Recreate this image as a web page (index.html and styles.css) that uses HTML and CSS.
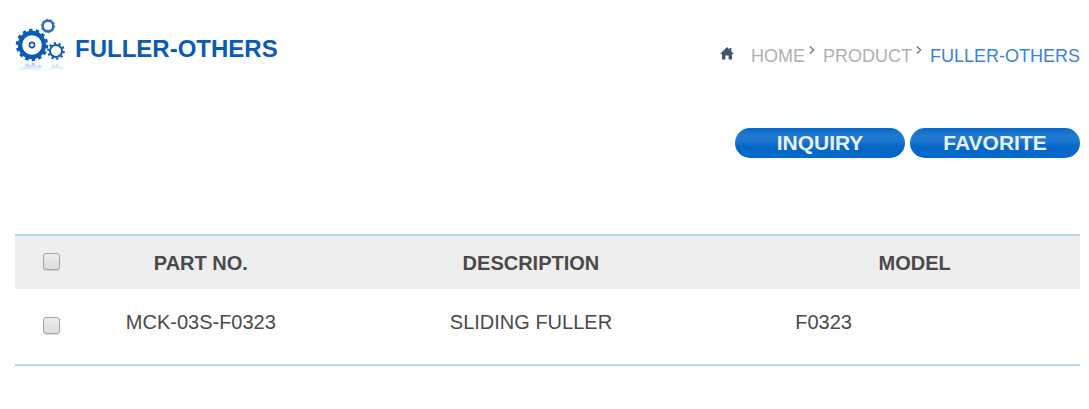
FILE: index.html
```
<!DOCTYPE html>
<html lang="en">
<head>
    <meta charset="UTF-8">
    <meta name="viewport" content="width=device-width, initial-scale=1.0">
    <title>FULLER-OTHERS</title>
    <link rel="stylesheet" href="styles.css">
</head>
<body>
    <header class="page-header">
        <div class="title">
            <svg class="gears" width="54" height="54" viewBox="0 0 54 54" aria-hidden="true">
                <defs>
                    <linearGradient id="fade" gradientUnits="userSpaceOnUse" x1="0" y1="43" x2="0" y2="53">
                        <stop offset="0" stop-color="#fff" stop-opacity="0.4"/>
                        <stop offset="1" stop-color="#fff" stop-opacity="0"/>
                    </linearGradient>
                    <mask id="fadeMask" maskUnits="userSpaceOnUse" x="0" y="43" width="54" height="11">
                        <rect x="0" y="43" width="54" height="11" fill="url(#fade)"/>
                    </mask>
                </defs>
                <g id="lowGears" fill="none" stroke="#0b5cb5">
                    <!-- big gear -->
                    <circle cx="17" cy="27" r="12" stroke-width="4.4"/>
                    <circle cx="17" cy="27" r="14.8" stroke-width="2.8" stroke-dasharray="3.4 3.242"/>
                    <circle cx="17" cy="27" r="2.6" stroke-width="1.6"/>
                    <!-- right gear -->
                    <circle cx="41" cy="33" r="6" stroke-width="2"/>
                    <circle cx="41" cy="33" r="7.8" stroke-width="2" stroke-dasharray="2.2 2.701"/>
                </g>
                <!-- top gear -->
                <circle cx="33" cy="8" r="5.4" fill="none" stroke="#2a6fc0" stroke-width="2.6"/>
                <circle cx="33" cy="8" r="6.8" fill="none" stroke="#2a6fc0" stroke-width="0.8" stroke-dasharray="2 2.272"/>
                <!-- reflection -->
                <g mask="url(#fadeMask)">
                    <use href="#lowGears" transform="translate(0 88) scale(1 -1)"/>
                </g>
            </svg>
            <h1>FULLER-OTHERS</h1>
        </div>

        <nav class="breadcrumb">
            <svg class="home" width="14" height="13" viewBox="0 0 14 13" aria-hidden="true">
                <path fill="#44546a" d="M7 0 L9.4 2.4 V1 H11.4 V4.4 L14 7 H12 V12 Q12 12.5 11.5 12.5 H8.6 V8.5 H5.4 V12.5 H2.5 Q2 12.5 2 12 V7 H0 Z"/>
            </svg>
            <a href="#">HOME</a>
            <svg class="arrow" width="6" height="8" viewBox="0 0 6 8" aria-hidden="true">
                <path fill="none" stroke="#777" stroke-width="1.4" d="M1 0.5 L4.6 4 L1 7.5"/>
            </svg>
            <a href="#">PRODUCT</a>
            <svg class="arrow" width="6" height="8" viewBox="0 0 6 8" aria-hidden="true">
                <path fill="none" stroke="#777" stroke-width="1.4" d="M1 0.5 L4.6 4 L1 7.5"/>
            </svg>
            <a href="#" class="current">FULLER-OTHERS</a>
        </nav>
    </header>

    <div class="buttons">
        <button type="button">INQUIRY</button>
        <button type="button">FAVORITE</button>
    </div>

    <table>
        <colgroup>
            <col class="col-check">
            <col class="col-part">
            <col class="col-desc">
            <col class="col-model">
        </colgroup>
        <thead>
            <tr>
                <th><input type="checkbox" id="checkAll" aria-label="Select all"></th>
                <th>PART NO.</th>
                <th>DESCRIPTION</th>
                <th>MODEL</th>
            </tr>
        </thead>
        <tbody>
            <tr>
                <td><input type="checkbox" aria-label="Select MCK-03S-F0323"></td>
                <td>MCK-03S-F0323</td>
                <td>SLIDING FULLER</td>
                <td class="model">F0323</td>
            </tr>
        </tbody>
    </table>

    <script>
        // header checkbox ticks every row
        document.getElementById('checkAll').onchange = function () {
            document.querySelectorAll('tbody input').forEach(box => {
                box.checked = this.checked;
            });
        };
    </script>
</body>
</html>
```
FILE: styles.css
```
* {
    box-sizing: border-box;
}

body {
    font-family: "Liberation Sans", Arial, sans-serif;
    margin: 0;
    padding: 18px 9px 40px 15px;
    background-color: #fff;
    color: #4a4a4a;
}

/* Title and breadcrumb */
.page-header {
    display: flex;
    justify-content: space-between;
    align-items: flex-start;
}

.title {
    display: flex;
    align-items: flex-start;
    gap: 6px;
}

h1 {
    margin: 16px 0 0;
    font-size: 24px;
    line-height: 30px;
    color: #0b5cb0;
}

.breadcrumb {
    display: flex;
    align-items: flex-start;
    margin-top: 27px;
    font-size: 18px;
    line-height: 22px;
}

.breadcrumb a {
    color: #b0b0b0;
    text-decoration: none;
}

.breadcrumb a.current {
    color: #3c82d6;
}

.home {
    margin: 2px 17px 0 0;
}

.arrow {
    margin: 1px 8px 0 4px;
}

/* Buttons */
.buttons {
    display: flex;
    justify-content: flex-end;
    gap: 5px;
    margin: 56px 0 76px;
}

button {
    width: 170px;
    height: 30px;
    padding: 0;
    border: none;
    border-radius: 15px;
    font-family: inherit;
    font-size: 21px;
    font-weight: bold;
    line-height: 30px;
    color: #e8f2ff;
    cursor: pointer;
    background: linear-gradient(#0468c8 0%, #2079d0 25%, #1c76cf 45%, #0468c8 60%, #0468c8 100%);
}

/* Parts table */
table {
    width: 100%;
    table-layout: fixed;
    border-collapse: separate;
    border-spacing: 0;
    border-top: 2px solid #b8d6ec;
    border-bottom: 2px solid #b8d6ec;
    font-size: 20px;
    line-height: 24px;
}

.col-check {
    width: 74px;
}

.col-part {
    width: 21%;
}

.col-desc {
    width: 41%;
}

th, td {
    padding: 0;
    text-align: center;
    vertical-align: top;
}

th {
    padding: 15px 0 14px;
    background-color: #eee;
}

td {
    padding: 21px 0 30px;
}

td.model {
    padding-left: 46px;
    text-align: left;
}

input[type="checkbox"] {
    appearance: none;
    display: block;
    width: 17px;
    height: 17px;
    margin: 2px auto 0 28px;
    border: 1px solid #a6a6a6;
    border-radius: 3px;
    background: linear-gradient(#ececec, #dcdcdc);
    box-shadow: 0 1px 1px rgba(0, 0, 0, 0.15);
}

td input[type="checkbox"] {
    margin-top: 7px;
}

input[type="checkbox"]:checked {
    background: #0468c8;
}
```
